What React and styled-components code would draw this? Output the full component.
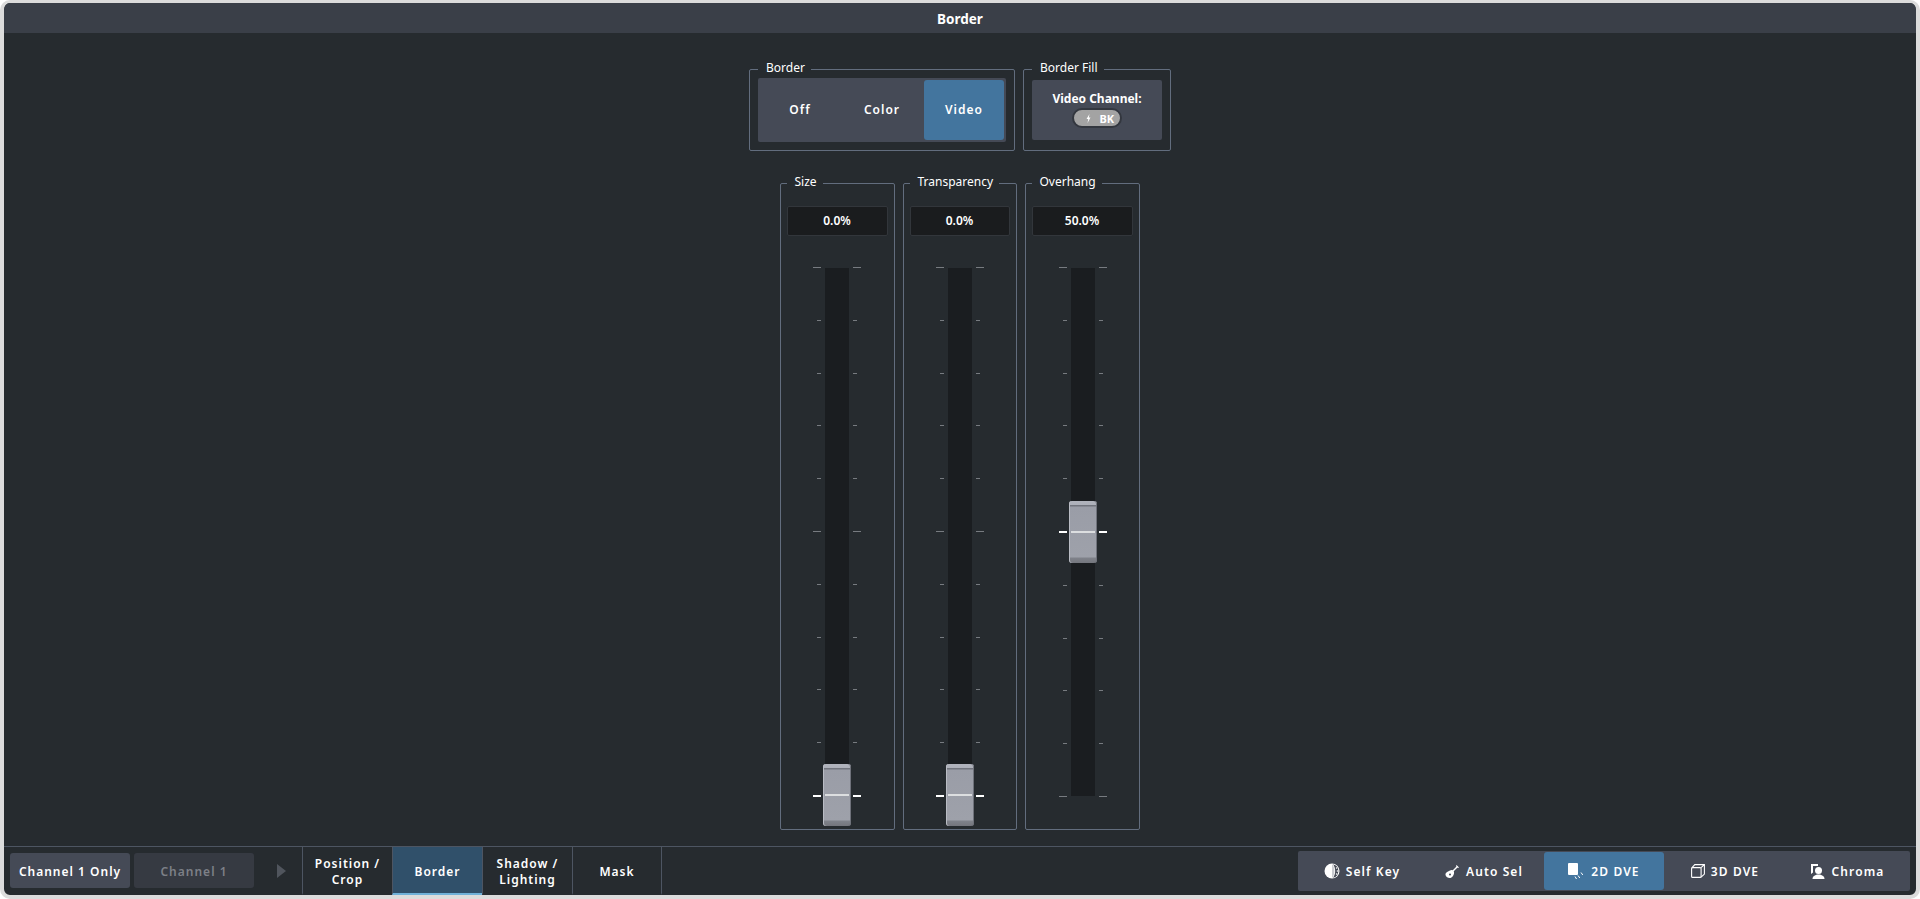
import React from "react";
import styled, { createGlobalStyle } from "styled-components";

const Global = createGlobalStyle`
  html, body { margin: 0; height: 100%; background: #fff; overflow: hidden; }
  #root { height: 100%; }
  * { box-sizing: border-box; }
`;

const Frame = styled.div`
  width: 1920px; height: 899px;
  border: 4px solid #dcdcdc;
  border-top-width: 3px;
  border-radius: 10px;
  background: #262b2f;
  display: flex; flex-direction: column;
  overflow: hidden;
  font-family: "Noto Sans", "Open Sans", sans-serif;
  color: #fff;
`;
const TitleBar = styled.div`
  height: 30px; flex: none;
  background: #3a3f48;
  display: flex; align-items: center; justify-content: center;
  font-size: 13.5px; font-weight: 700; padding-top: 1px;
`;
const Main = styled.div`
  flex: 1; min-height: 0;
  display: flex; flex-direction: column; align-items: center;
  padding: 29px 0 0 0;
`;
const TopRow = styled.div`
  display: flex; gap: 8px;
`;
const SliderRow = styled.div`
  display: flex; gap: 8px; margin-top: 25px; margin-left: -1px;
`;
const Group = styled.fieldset`
  margin: 0;
  border: 1px solid #626d7e;
  border-radius: 2px;
  width: ${p => p.$w}px;
  height: ${p => p.$h}px;
  padding: ${p => p.$pad};
  min-width: 0;
  position: relative;
`;
const Legend = styled.legend`
  font-size: 12px; line-height: 14px;
  padding: 0 7px; margin-left: 0;
  color: #fff;
  transform: translate(1px, -1px);
`;
const ButtonGroup = styled.div`
  height: 64px; background: #454a56; border-radius: 2px;
  display: flex; gap: 2px; padding: 2px; margin-top: 2px;
`;
const ModeButton = styled.div`
  width: 80px; height: 60px;
  border-radius: 3px;
  background: ${p => (p.$active ? "#43759e" : "transparent")};
  display: flex; align-items: center; justify-content: center;
  font-size: 12px; font-weight: 600; letter-spacing: 1px;
  padding-bottom: 1px;
`;
const FillPanel = styled.div`
  height: 60px; background: #454a56; border-radius: 2px;
  display: flex; flex-direction: column; align-items: center;
  padding-top: 11px; margin-top: 4px;
`;
const FillLabel = styled.div`
  font-size: 12px; font-weight: 700; line-height: 16px;
`;
const Pill = styled.div`
  margin-top: 1px;
  width: 50px; height: 20px; border-radius: 10px;
  background: #a3a3a3; border: 2px solid #33373f;
  display: flex; align-items: center; justify-content: flex-end; gap: 8px;
  padding-right: 6px;
  font-size: 11px; font-weight: 700; letter-spacing: 0;
`;
const ValueBox = styled.div`
  height: 30px; margin-top: 16px;
  background: #1a1c1e; border: 1px solid #32363b; border-radius: 2px;
  display: flex; align-items: center; justify-content: center;
  font-size: 12px; font-weight: 600;
  padding-bottom: 1px;
`;
const Fader = styled.div`
  margin-top: 31px;
  height: 530px;
  display: grid; grid-template-columns: 8px 24px 8px; column-gap: 4px;
  justify-content: center;
  position: relative;
  padding-left: ${p => (p.$nudge ? 2 : 0)}px;
`;
const TickColumn = styled.div`
  display: flex; flex-direction: column; justify-content: space-between;
  align-items: ${p => (p.$side === "left" ? "flex-end" : "flex-start")};
`;
const Tick = styled.div`
  height: ${p => (p.$bright ? 2 : 1)}px;
  width: ${p => (p.$major ? 8 : 4)}px;
  background: ${p => (p.$bright ? "#fff" : "#777b80")};
`;
const Track = styled.div`
  background: #1a1d20;
  position: relative;
  margin-top: 1px;
  margin-bottom: 1px;
`;
const Thumb = styled.div`
  position: absolute;
  left: -2px; width: 28px; height: 62px;
  top: ${p => p.$top}px;
  border-radius: 3px;
  background: linear-gradient(#b0b3bc 0, #adb0b9 4px, #71747d 4px, #71747d 5px, #9a9da7 6px, #9ea1aa 56px, #7f828a 57px, #74767d 62px);
  box-shadow: inset 1px 0 0 #b9bcc4, inset -1px 0 0 #6f727b;
  &::after {
    content: ""; position: absolute; left: 2px; right: 2px; top: ${p => p.$line}px;
    height: 2px; background: #dcdee0;
  }
`;
const BottomBar = styled.div`
  height: 49px; flex: none;
  border-top: 1px solid #4d5562;
  display: flex; align-items: stretch;
  padding-left: 6px; padding-right: 6px;
`;
const ChannelGroup = styled.div`
  display: flex; align-items: center; gap: 4px; padding-bottom: 1px;
`;
const ChannelButton = styled.div`
  width: ${p => p.$w}px; height: 35px; border-radius: 3px;
  background: ${p => (p.$dim ? "#363a42" : "#454a56")};
  color: ${p => (p.$dim ? "#7d8087" : "#fff")};
  display: flex; align-items: center; justify-content: center;
  font-size: 12px; font-weight: 600; letter-spacing: 1px;
  padding-top: 1px;
`;
const Arrow = styled.div`
  width: 48px; display: flex; align-items: center; justify-content: center;
  padding-left: 6px;
`;
const Tab = styled.div`
  width: 90px;
  border-left: 1px solid #4d5562;
  border-right: ${p => (p.$last ? "1px solid #4d5562" : "0")};
  background: ${p => (p.$active ? "#30506a" : "transparent")};
  border-bottom: 2px solid ${p => (p.$active ? "#6fb1d8" : "transparent")};
  display: flex; align-items: center; justify-content: center; text-align: center;
  font-size: 12px; font-weight: 600; letter-spacing: 1px; line-height: 16px;
  padding-top: 4px;
`;
const Spacer = styled.div` flex: 1; `;
const KeyGroup = styled.div`
  align-self: center;
  width: 612px; height: 40px;
  background: #454a56; border-radius: 2px;
  display: flex; padding: 1px 2px;
  margin-bottom: 1px;
`;
const KeyButton = styled.div`
  width: ${p => p.$w}px; height: 38px; border-radius: 3px;
  background: ${p => (p.$active ? "#43759e" : "transparent")};
  display: flex; align-items: center; justify-content: center; gap: 6px;
  font-size: 12px; font-weight: 600; letter-spacing: 1.1px;
  padding-top: 1px;
`;

const ticks = Array.from({ length: 11 }, (_, i) => i);

function FaderControl({ label, value, w, top, active, nudge }) {
  return (
    <Group $w={w} $h={654} $pad="0 6px">
      <Legend>{label}</Legend>
      <ValueBox>{value}</ValueBox>
      <Fader $nudge={nudge}>
        <TickColumn $side="left">
          {ticks.map(i => (
            <Tick key={i} $major={i % 5 === 0} $bright={i === active} />
          ))}
        </TickColumn>
        <Track><Thumb $top={top} $line={30} /></Track>
        <TickColumn $side="right">
          {ticks.map(i => (
            <Tick key={i} $major={i % 5 === 0} $bright={i === active} />
          ))}
        </TickColumn>
      </Fader>
    </Group>
  );
}

const SelfKeyIcon = () => (
  <svg width="16" height="16" viewBox="0 0 16 16">
    <circle cx="8" cy="8" r="7.5" fill="#fff" />
    <path d="M9 1.200a7 7 0 0 1 0 13.600c1.500-2 2.200-4.300 2.200-6.800S10.500 3.200 9 1.200z" fill="#454a56" />
    <circle cx="12.600" cy="5" r=".8" fill="#fff" /><circle cx="13.400" cy="8" r=".8" fill="#fff" /><circle cx="12.600" cy="11" r=".8" fill="#fff" />
    <path d="M8 1c1.700 2 2.400 4.400 2.400 7S9.700 13 8 15z" fill="#c9cbd0" />
  </svg>
);
const AutoSelIcon = () => (
  <svg width="15" height="15" viewBox="0 0 15 15">
    <path d="M5 6.500a3 3 0 0 1 3.500.5 3 3 0 0 1 .5 2.500c-.5 2-1.500 4-3.500 4.500C3.500 14.500 1 13 .5 11 0 9 2 8 3 7.500z" fill="#fff" />
    <path d="M6.500 8.500 12.500 2.500" stroke="#fff" strokeWidth="1.500" />
    <path d="M11.500 1l2.500 2.500-1 .5-2-2z" fill="#fff" />
    <circle cx="5" cy="10.500" r="1" fill="#454a56" />
  </svg>
);
const TwoDIcon = () => (
  <svg width="17" height="17" viewBox="0 0 17 17">
    <rect x="0" y="0" width="10" height="12" rx="1" fill="#fff" />
    <path d="M7 13.500l1.500 2.500M10 12.500l1.800 2.500M13 9.500l1.800 2.500" stroke="#fff" strokeWidth="1" fill="none" />
  </svg>
);
const ThreeDIcon = () => (
  <svg width="14" height="14" viewBox="0 0 14 14" fill="none" stroke="#fff" strokeWidth="1.100">
    <rect x=".6" y="3.600" width="9.500" height="9.800" rx="1" />
    <path d="M.8 3.800 3.800.6h9.600v9.500l-3.300 3.100M10.100 3.600l3.200-3" />
  </svg>
);
const ChromaIcon = () => (
  <svg width="16" height="17" viewBox="0 0 16 17">
    <path d="M1 1h7v2H3v6.500L1 11z" fill="#fff" />
    <circle cx="8.500" cy="7.500" r="3.500" fill="#fff" />
    <path d="M2.500 16c0-3 3-4.500 6-4.500s6 1.500 6 4.500z" fill="#fff" />
  </svg>
);

export default function App() {
  return (
    <>
      <Global />
      <Frame>
        <TitleBar>Border</TitleBar>
        <Main>
          <TopRow>
            <Group $w={266} $h={89} $pad="0 8px">
              <Legend>Border</Legend>
              <ButtonGroup>
                <ModeButton>Off</ModeButton>
                <ModeButton>Color</ModeButton>
                <ModeButton $active>Video</ModeButton>
              </ButtonGroup>
            </Group>
            <Group $w={148} $h={89} $pad="0 8px">
              <Legend>Border Fill</Legend>
              <FillPanel>
                <FillLabel>Video Channel:</FillLabel>
                <Pill>
                  <svg width="5" height="9" viewBox="0 0 5 9"><path d="M3.500 0 .5 5h1.800L1.500 9l3-5.500H2.800z" fill="#fff" /></svg>
                  BK
                </Pill>
              </FillPanel>
            </Group>
          </TopRow>
          <SliderRow>
            <FaderControl label="Size" value="0.0%" w={115} top={496} active={10} />
            <FaderControl label="Transparency" value="0.0%" w={114} top={496} active={10} />
            <FaderControl label="Overhang" value="50.0%" w={115} top={233} active={5} nudge />
          </SliderRow>
        </Main>
        <BottomBar>
          <ChannelGroup>
            <ChannelButton $w={120}>Channel 1 Only</ChannelButton>
            <ChannelButton $w={120} $dim>Channel 1</ChannelButton>
          </ChannelGroup>
          <Arrow>
            <svg width="9" height="14" viewBox="0 0 9 14"><path d="M0 0l9 7-9 7z" fill="#50555d" /></svg>
          </Arrow>
          <Tab>Position /<br />Crop</Tab>
          <Tab $active>Border</Tab>
          <Tab>Shadow /<br />Lighting</Tab>
          <Tab $last>Mask</Tab>
          <Spacer />
          <KeyGroup>
            <KeyButton $w={124}><SelfKeyIcon />Self Key</KeyButton>
            <KeyButton $w={120}><AutoSelIcon />Auto Sel</KeyButton>
            <KeyButton $w={120} $active><TwoDIcon />2D DVE</KeyButton>
            <KeyButton $w={122}><ThreeDIcon />3D DVE</KeyButton>
            <KeyButton $w={122}><ChromaIcon />Chroma</KeyButton>
          </KeyGroup>
        </BottomBar>
      </Frame>
    </>
  );
}
